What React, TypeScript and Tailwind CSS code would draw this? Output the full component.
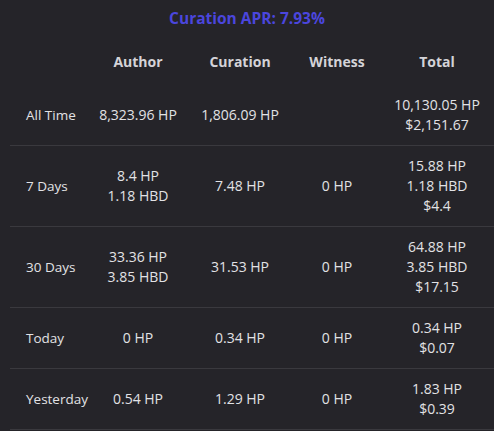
const rows: { label: string; author: string[]; curation: string[]; witness: string[]; total: string[] }[] = [
  { label: "All Time", author: ["8,323.96 HP"], curation: ["1,806.09 HP"], witness: [], total: ["10,130.05 HP", "$2,151.67"] },
  { label: "7 Days", author: ["8.4 HP", "1.18 HBD"], curation: ["7.48 HP"], witness: ["0 HP"], total: ["15.88 HP", "1.18 HBD", "$4.4"] },
  { label: "30 Days", author: ["33.36 HP", "3.85 HBD"], curation: ["31.53 HP"], witness: ["0 HP"], total: ["64.88 HP", "3.85 HBD", "$17.15"] },
  { label: "Today", author: ["0 HP"], curation: ["0.34 HP"], witness: ["0 HP"], total: ["0.34 HP", "$0.07"] },
  { label: "Yesterday", author: ["0.54 HP"], curation: ["1.29 HP"], witness: ["0 HP"], total: ["1.83 HP", "$0.39"] },
];

function Lines({ items }: { items: string[] }) {
  return (
    <>
      {items.map((t) => (
        <div key={t}>{t}</div>
      ))}
    </>
  );
}

export default function App() {
  return (
    <main className="min-h-screen bg-[#252429] text-[14px] leading-5 text-[#e2e2e5] font-['Open_Sans','Noto_Sans',sans-serif] overflow-hidden">
      <h2 className="pt-[8px] text-center text-[15.5px] font-bold leading-5 text-[#4b46dd]">
        Curation APR: 7.93%
      </h2>
      <table className="ml-[10px] mt-[12px] w-[484px] table-fixed border-collapse">
        <colgroup>
          <col className="w-[80px]" />
          <col className="w-[96px]" />
          <col className="w-[108px]" />
          <col className="w-[86px]" />
          <col className="w-[114px]" />
        </colgroup>
        <thead>
          <tr className="font-bold text-[#d4d3d8]">
            <th className="pt-3 pb-[13px]" />
            <th className="pt-3 pb-[13px] text-center">Author</th>
            <th className="pt-3 pb-[13px] text-center">Curation</th>
            <th className="pt-3 pb-[13px] text-center">Witness</th>
            <th className="pt-3 pb-[13px] text-center">Total</th>
          </tr>
        </thead>
        <tbody>
          {rows.map((r) => (
            <tr key={r.label} className="border-b border-[#3a393e]">
              <td className="py-[10px] pl-4 text-left text-[13.5px]">{r.label}</td>
              <td className="py-[10px] text-center">
                <Lines items={r.author} />
              </td>
              <td className="py-[10px] text-center">
                <Lines items={r.curation} />
              </td>
              <td className="py-[10px] text-center">
                <Lines items={r.witness} />
              </td>
              <td className="py-[10px] text-center">
                <Lines items={r.total} />
              </td>
            </tr>
          ))}
        </tbody>
      </table>
    </main>
  );
}
